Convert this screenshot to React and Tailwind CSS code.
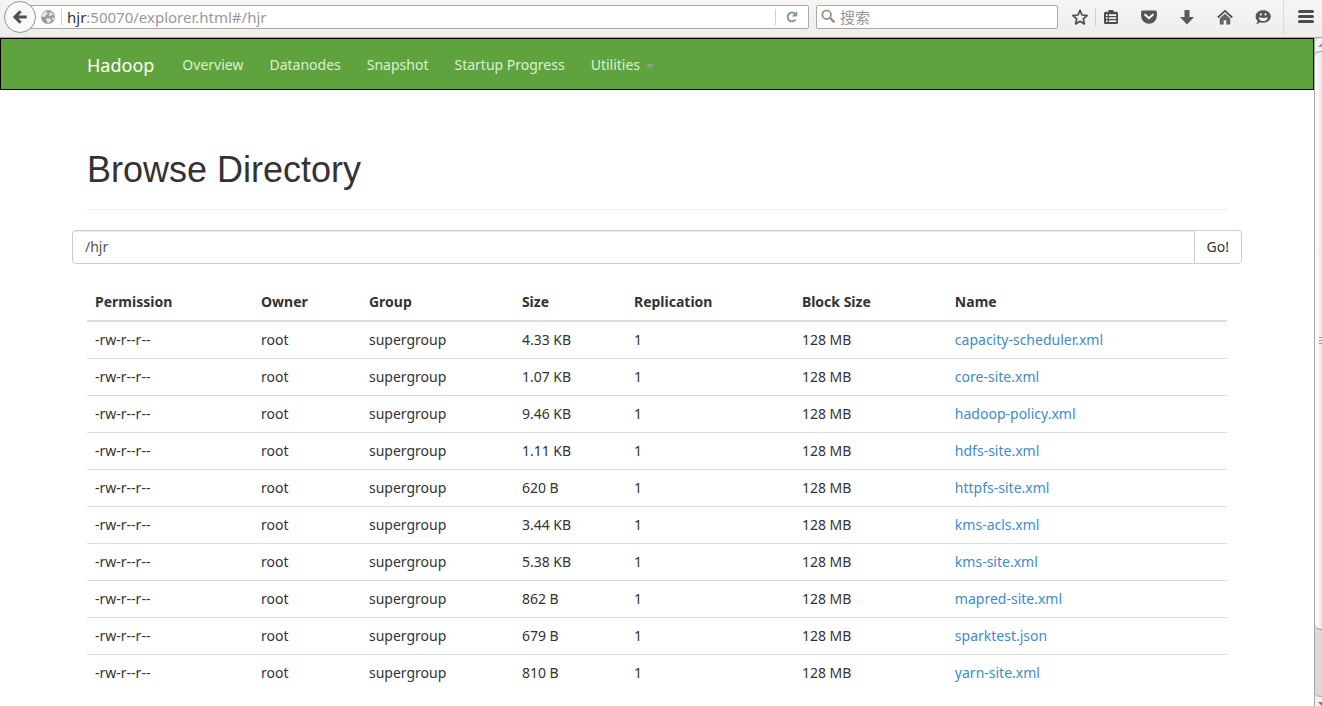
import React from "react";

const files = [
  ["4.33 KB", "capacity-scheduler.xml"],
  ["1.07 KB", "core-site.xml"],
  ["9.46 KB", "hadoop-policy.xml"],
  ["1.11 KB", "hdfs-site.xml"],
  ["620 B", "httpfs-site.xml"],
  ["3.44 KB", "kms-acls.xml"],
  ["5.38 KB", "kms-site.xml"],
  ["862 B", "mapred-site.xml"],
  ["679 B", "sparktest.json"],
  ["810 B", "yarn-site.xml"],
];

const columns = [
  ["Permission", "w-[14.56%]"],
  ["Owner", "w-[9.47%]"],
  ["Group", "w-[13.42%]"],
  ["Size", "w-[9.83%]"],
  ["Replication", "w-[14.73%]"],
  ["Block Size", "w-[13.42%]"],
  ["Name", "w-auto"],
];

function Icon({ children, className = "size-4" }) {
  return (
    <svg viewBox="0 0 16 16" className={className} aria-hidden="true">
      {children}
    </svg>
  );
}

function ToolButton({ label, children }) {
  return (
    <button type="button" aria-label={label} className="flex size-4 items-center justify-center text-[#4c4c4c]">
      {children}
    </button>
  );
}

function BrowserToolbar() {
  return (
    <div className="flex h-[38px] shrink-0 items-center border-b border-[#a8a4a0] bg-linear-to-b from-[#f6f5f4] to-[#efedeb] pb-1 pl-1 text-[15px]">
      <button
        type="button"
        aria-label="Back"
        className="relative z-10 flex size-8 shrink-0 items-center justify-center rounded-full border border-[#8d96a3] bg-[#f9f9f9]"
      >
        <Icon>
          <path d="M8.600 2.200 2.900 8l5.700 5.800M3.500 8H14.700" fill="none" stroke="#505050" strokeWidth="3" />
        </Icon>
      </button>
      <div className="-ml-2 flex h-6 flex-1 items-center rounded-r-xs border border-[#aea8a1] bg-white">
        <svg viewBox="0 0 16 16" className="ml-[11px] size-4 shrink-0" aria-hidden="true">
          <circle cx="8" cy="8" r="7" fill="#999" />
          <path
            d="M2.500 4.500 5 2.200l2.500.3-.7 1.700 1.200 1-2 .8-.5 1.500-2.500.5-1.700-.8ZM9.500 3l2.500.8 1.600 2.200-2.300.2-1.300 1-1.400-.7.8-1.500ZM7.500 9l3 .7.700 1.600-1.700 2.500-2 .8-.4-2.600-1.300-1.600ZM12 8.500l2.300.2-.9 2.800-1.300-1Z"
            fill="#e4e4e4"
          />
        </svg>
        <span className="ml-[5px] h-4 w-px bg-[#d0d0d0]" />
        <label htmlFor="address" className="ml-[5px]">hjr</label>
        <input
          id="address"
          defaultValue=":50070/explorer.html#/hjr"
          className="min-w-0 flex-1 bg-transparent text-[#999] outline-none"
        />
        <button type="button" aria-label="Reload" className="flex h-4 w-[33px] items-center justify-center border-l border-[#d0d0d0]">
          <Icon className="size-3.5">
            <path d="M12.200 10.800a5 5 0 1 1-.5-6.300" fill="none" stroke="#8795a1" strokeWidth="2.200" />
            <path d="M14 1.200v6.300H7.700Z" fill="#8795a1" />
          </Icon>
        </button>
      </div>
      <label className="ml-[7px] flex h-6 w-[242px] shrink-0 items-center rounded-xs border border-[#aea8a1] bg-white pl-1">
        <Icon className="size-[15px] shrink-0">
          <circle cx="6" cy="6" r="4.600" fill="none" stroke="#929292" strokeWidth="2" />
          <path d="m9.300 9.300 5 5" stroke="#929292" strokeWidth="2.600" />
        </Icon>
        <input
          aria-label="搜索"
          placeholder="搜索"
          className="ml-1 w-full min-w-0 bg-transparent text-[15px] outline-none placeholder:text-[#999]"
        />
      </label>
      <div className="ml-[14px] flex items-center">
        <ToolButton label="Bookmark">
          <Icon>
            <path d="m8 1.300 2 4.700 5.100.5-3.800 3.400 1.100 5L8 12.300l-4.400 2.600 1.100-5L.9 6.500 6 6Z" fill="none" stroke="currentColor" strokeWidth="1.700" strokeLinejoin="round" />
          </Icon>
        </ToolButton>
        <span className="ml-[7px] h-[18px] w-px bg-[#d0cecc]" />
      </div>
      <div className="ml-[7px] flex items-center gap-[22px]">
        <ToolButton label="Bookmarks list">
          <Icon>
            <path d="M5.500 2.800V1h5v1.800H13.500a1.500 1.500 0 0 1 1.500 1.500v9.200a1.500 1.500 0 0 1-1.500 1.500h-11A1.500 1.500 0 0 1 1 13.500V4.300a1.500 1.500 0 0 1 1.500-1.500Z" fill="currentColor" />
            <path d="M3 6.200h1.700M3 9.200h1.700M3 12.200h1.700M6 6.200h7.200M6 9.200h7.200M6 12.200h7.200" stroke="#f4f3f2" strokeWidth="1.700" />
          </Icon>
        </ToolButton>
        <ToolButton label="Pocket">
          <Icon>
            <path d="M1.500 1.500h13a1.400 1.400 0 0 1 1.400 1.400V7A7.900 7.700 0 0 1 .1 7V2.900a1.400 1.400 0 0 1 1.400-1.400Z" fill="#555" />
            <path d="M4.200 5.700 8 9.300l3.800-3.600" fill="none" stroke="#f4f3f2" strokeWidth="2.200" strokeLinecap="round" strokeLinejoin="round" />
          </Icon>
        </ToolButton>
        <ToolButton label="Downloads">
          <Icon>
            <path d="M5.500 1h5v7H15L8 15.500 1 8h4.500Z" fill="#5a5a5a" />
          </Icon>
        </ToolButton>
        <ToolButton label="Home">
          <Icon>
            <path d="M.8 8.500 8 1.900l7.200 6.600" fill="none" stroke="#4c4c4c" strokeWidth="1.700" />
            <path d="M8 5l5 4.600V15.300H9.600v-4.300H6.400v4.300H3V9.600Z" fill="#666" stroke="#4c4c4c" strokeWidth=".4" />
          </Icon>
        </ToolButton>
        <ToolButton label="Chat">
          <Icon>
            <path d="M8.200 1.300c4.200 0 7.600 2.700 7.600 6.200s-3.400 6.200-7.600 6.200c-1 0-2-.1-2.900-.5-1 .9-2.300 1.500-4.200 1.500.9-.7 1.400-1.500 1.500-2.900C1.200 10.700.6 9.200.6 7.500c0-3.500 3.400-6.200 7.600-6.200Z" fill="#555" />
            <path d="M3.700 8.200c2.500 1 6.500 1 9 0-.3 2.500-2 3.900-4.500 3.900S4 10.700 3.700 8.200Z" fill="#f4f3f2" />
            <circle cx="5.900" cy="5.400" r="1.100" fill="#f4f3f2" />
            <circle cx="10.500" cy="5.400" r="1.100" fill="#f4f3f2" />
          </Icon>
        </ToolButton>
      </div>
      <div className="ml-3 flex h-[34px] items-center border-l border-[#dddbd9] pr-2 pl-3.5">
        <button type="button" aria-label="Menu" className="flex w-4 flex-col gap-0.5">
          <span className="h-[3px] rounded-full bg-[#4c4c4c]" />
          <span className="h-[3px] rounded-full bg-[#4c4c4c]" />
          <span className="h-[3px] rounded-full bg-[#4c4c4c]" />
        </button>
      </div>
    </div>
  );
}

function NavBar() {
  return (
    <nav className="border border-black bg-[#5fa33e]">
      <div className="mx-auto flex h-[50px] max-w-[1170px] items-center px-[15px] pt-0.5 text-[#dcf0d2]">
        <a href="#home" className="mr-7 text-lg text-white">Hadoop</a>
        <div className="flex items-center gap-[26px]">
          <a href="#overview">Overview</a>
          <a href="#datanodes">Datanodes</a>
          <a href="#snapshot">Snapshot</a>
          <a href="#startup">Startup Progress</a>
          <button type="button" className="flex items-center gap-1.5">
            Utilities
            <svg viewBox="0 0 8 4" className="mt-0.5 h-1 w-2" aria-hidden="true">
              <path d="M0 0h8L4 4Z" fill="#999" />
            </svg>
          </button>
        </div>
      </div>
    </nav>
  );
}

function FileTable() {
  return (
    <table className="mt-5 w-full table-fixed border-separate border-spacing-0 text-left">
      <thead>
        <tr>
          {columns.map(([name, width]) => (
            <th key={name} scope="col" className={`${width} border-b-2 border-[#ddd] p-2 font-bold`}>
              {name}
            </th>
          ))}
        </tr>
      </thead>
      <tbody className="[&>tr+tr>td]:border-t [&>tr+tr>td]:border-[#ddd]">
        {files.map(([size, name]) => (
          <tr key={name}>
            <td className="p-2">-rw-r--r--</td>
            <td className="p-2">root</td>
            <td className="p-2">supergroup</td>
            <td className="p-2">{size}</td>
            <td className="p-2">1</td>
            <td className="p-2">128 MB</td>
            <td className="p-2">
              <a href={`#/hjr/${name}`} className="text-[#428bca]">{name}</a>
            </td>
          </tr>
        ))}
      </tbody>
    </table>
  );
}

function ScrollBar() {
  return (
    <div aria-hidden="true" className="flex w-2 shrink-0 flex-col overflow-hidden border-l border-[#aaa6a1] bg-[#dcdad8]">
      <div className="flex h-[13px] shrink-0 items-center rounded-tl-md bg-[#f3f2f0]">
        <svg viewBox="0 0 10 5" className="ml-[3px] h-1 w-2 shrink-0">
          <path d="M0 5h10L5 0Z" fill="#999" />
        </svg>
      </div>
      <div className="flex flex-1 flex-col justify-center gap-[2px] rounded-l-md border-y border-[#999] bg-linear-to-r from-white to-[#e9e8e6] pl-1">
        <span className="h-px bg-[#999]" />
        <span className="h-px bg-[#999]" />
        <span className="h-px bg-[#999]" />
      </div>
      <div className="h-[67px] shrink-0 rounded-bl-md border-b border-[#b5b2af]" />
      <div className="flex h-[9px] shrink-0 items-end bg-[#f3f2f0]">
        <svg viewBox="0 0 10 5" className="ml-[3px] h-1 w-2 shrink-0">
          <path d="M0 0h10L5 5Z" fill="#777" />
        </svg>
      </div>
    </div>
  );
}

export default function App() {
  return (
    <div className="flex h-screen flex-col overflow-hidden bg-white font-['Noto_Sans','Noto_Sans_CJK_SC',sans-serif] text-sm leading-5 text-[#333]">
      <BrowserToolbar />
      <div className="flex min-h-0 flex-1">
        <div className="min-w-0 flex-1 overflow-hidden">
          <NavBar />
          <main className="mx-auto max-w-[1170px] px-[15px] pt-[60px]">
            <h1 className="border-b border-[#eee] pb-[19px] font-['Liberation_Sans',Arial,sans-serif] text-4xl leading-10">
              Browse Directory
            </h1>
            <form className="-mx-[15px] mt-5 flex h-[34px]" onSubmit={(event) => event.preventDefault()}>
              <input
                aria-label="Directory"
                defaultValue="/hjr"
                className="min-w-0 flex-1 rounded-l border border-[#ccc] px-3 text-[#555] shadow-[inset_0_1px_1px_rgba(0,0,0,0.075)] outline-none"
              />
              <button type="submit" className="-ml-px rounded-r border border-[#ccc] bg-white px-3">Go!</button>
            </form>
            <FileTable />
          </main>
        </div>
        <ScrollBar />
      </div>
    </div>
  );
}
